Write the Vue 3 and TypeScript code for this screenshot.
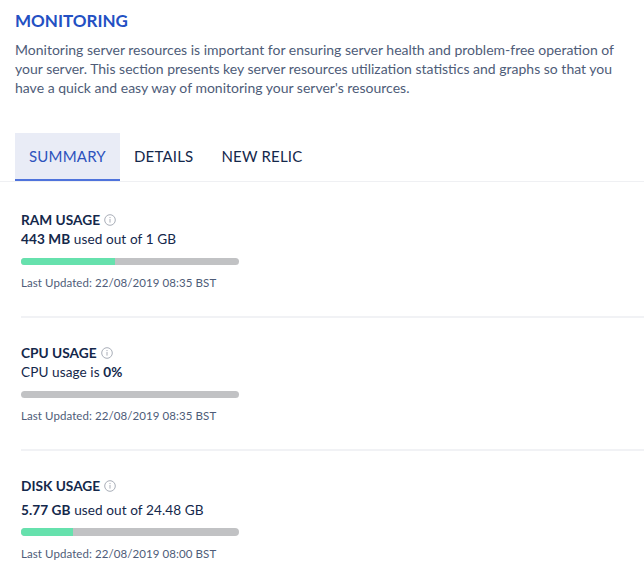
<script setup lang="ts">
interface Usage {
  title: string
  strong: string
  before: string
  after: string
  percent: number
  updated: string
  tall?: boolean
}

const tabs = ['SUMMARY', 'DETAILS', 'NEW RELIC']

const usages: Usage[] = [
  { title: 'RAM USAGE', before: '', strong: '443 MB', after: ' used out of 1 GB', percent: 43.3, updated: '22/08/2019 08:35 BST' },
  { title: 'CPU USAGE', before: 'CPU usage is ', strong: '0%', after: '', percent: 0, updated: '22/08/2019 08:35 BST' },
  { title: 'DISK USAGE', before: '', strong: '5.77 GB', after: ' used out of 24.48 GB', percent: 24, updated: '22/08/2019 08:00 BST', tall: true }
]
</script>

<template>
  <div class="page">
    <h1 class="title">MONITORING</h1>
    <p class="intro">
      Monitoring server resources is important for ensuring server health and problem-free operation of<br />
      your server. This section presents key server resources utilization statistics and graphs so that you<br />
      have a quick and easy way of monitoring your server's resources.
    </p>

    <div class="tabs">
      <div v-for="(tab, i) in tabs" :key="tab" class="tab" :class="{ active: i === 0 }">{{ tab }}</div>
    </div>

    <section v-for="u in usages" :key="u.title" class="usage">
      <div class="usage-title">
        {{ u.title }}
        <svg class="info" width="12" height="12" viewBox="0 0 12 12" fill="none">
          <circle cx="6" cy="6" r="5.3" stroke="#a9aeb8" stroke-width="1" />
          <rect x="5.5" y="5" width="1" height="3.6" fill="#a9aeb8" />
          <rect x="5.5" y="3" width="1" height="1.1" fill="#a9aeb8" />
        </svg>
      </div>
      <div class="usage-text" :class="{ tall: u.tall }">{{ u.before }}<b>{{ u.strong }}</b>{{ u.after }}</div>
      <div class="bar" :class="{ tall: u.tall }">
        <div class="fill" :style="{ width: u.percent + '%' }"></div>
      </div>
      <div class="updated">Last Updated: {{ u.updated }}</div>
    </section>
  </div>
</template>

<style>
html, body { background: #fff; }
</style>

<style scoped>
.page {
  width: 644px;
  height: 570px;
  overflow: hidden;
  font-family: Lato, "Liberation Sans", sans-serif;
  color: #14284b;
}
.title {
  margin: 0;
  padding: 11px 0 0 15px;
  font-size: 17px;
  line-height: 20px;
  font-weight: 700;
  color: #2350c3;
}
.intro {
  margin: 9px 0 0;
  padding-left: 15px;
  font-size: 14px;
  line-height: 19px;
  color: #4e5c78;
  white-space: nowrap;
}
.tabs {
  display: flex;
  margin-top: 36px;
  height: 48px;
  padding-left: 15px;
  border-bottom: 1px solid #eff0f3;
}
.tab {
  box-sizing: border-box;
  height: 48px;
  padding: 0 14px;
  font-size: 15px;
  line-height: 46px;
  letter-spacing: 0.2px;
}
.tab.active {
  background: #e9ecf6;
  color: #2d52bd;
  border-bottom: 2px solid #4f73dc;
}
.usage {
  margin-left: 21px;
  height: 133px;
  padding-top: 26px;
  box-sizing: border-box;
  border-bottom: 2px solid #f1f2f5;
}
.usage:first-of-type {
  height: 136px;
  padding-top: 29px;
}
.usage:last-of-type {
  border-bottom: 0;
}
.usage-title {
  display: flex;
  align-items: center;
  gap: 4px;
  font-size: 13.7px;
  line-height: 18px;
  font-weight: 700;
}
.info {
  flex: none;
}
.usage-text {
  margin-top: 1px;
  font-size: 13.6px;
  line-height: 19px;
  letter-spacing: 0.08px;
}
.usage-text.tall {
  margin-top: 6px;
}
.usage-text b {
  font-weight: 700;
}
.bar {
  margin-top: 9px;
  width: 218px;
  height: 7px;
  border-radius: 4px;
  overflow: hidden;
  background: #c1c2c4;
}
.bar.tall {
  margin-top: 8px;
  height: 8px;
}
.fill {
  height: 100%;
  background: #66e1ad;
}
.updated {
  margin-top: 11px;
  font-size: 11.5px;
  line-height: 14px;
  color: #4e5c78;
  letter-spacing: 0.08px;
}
</style>
